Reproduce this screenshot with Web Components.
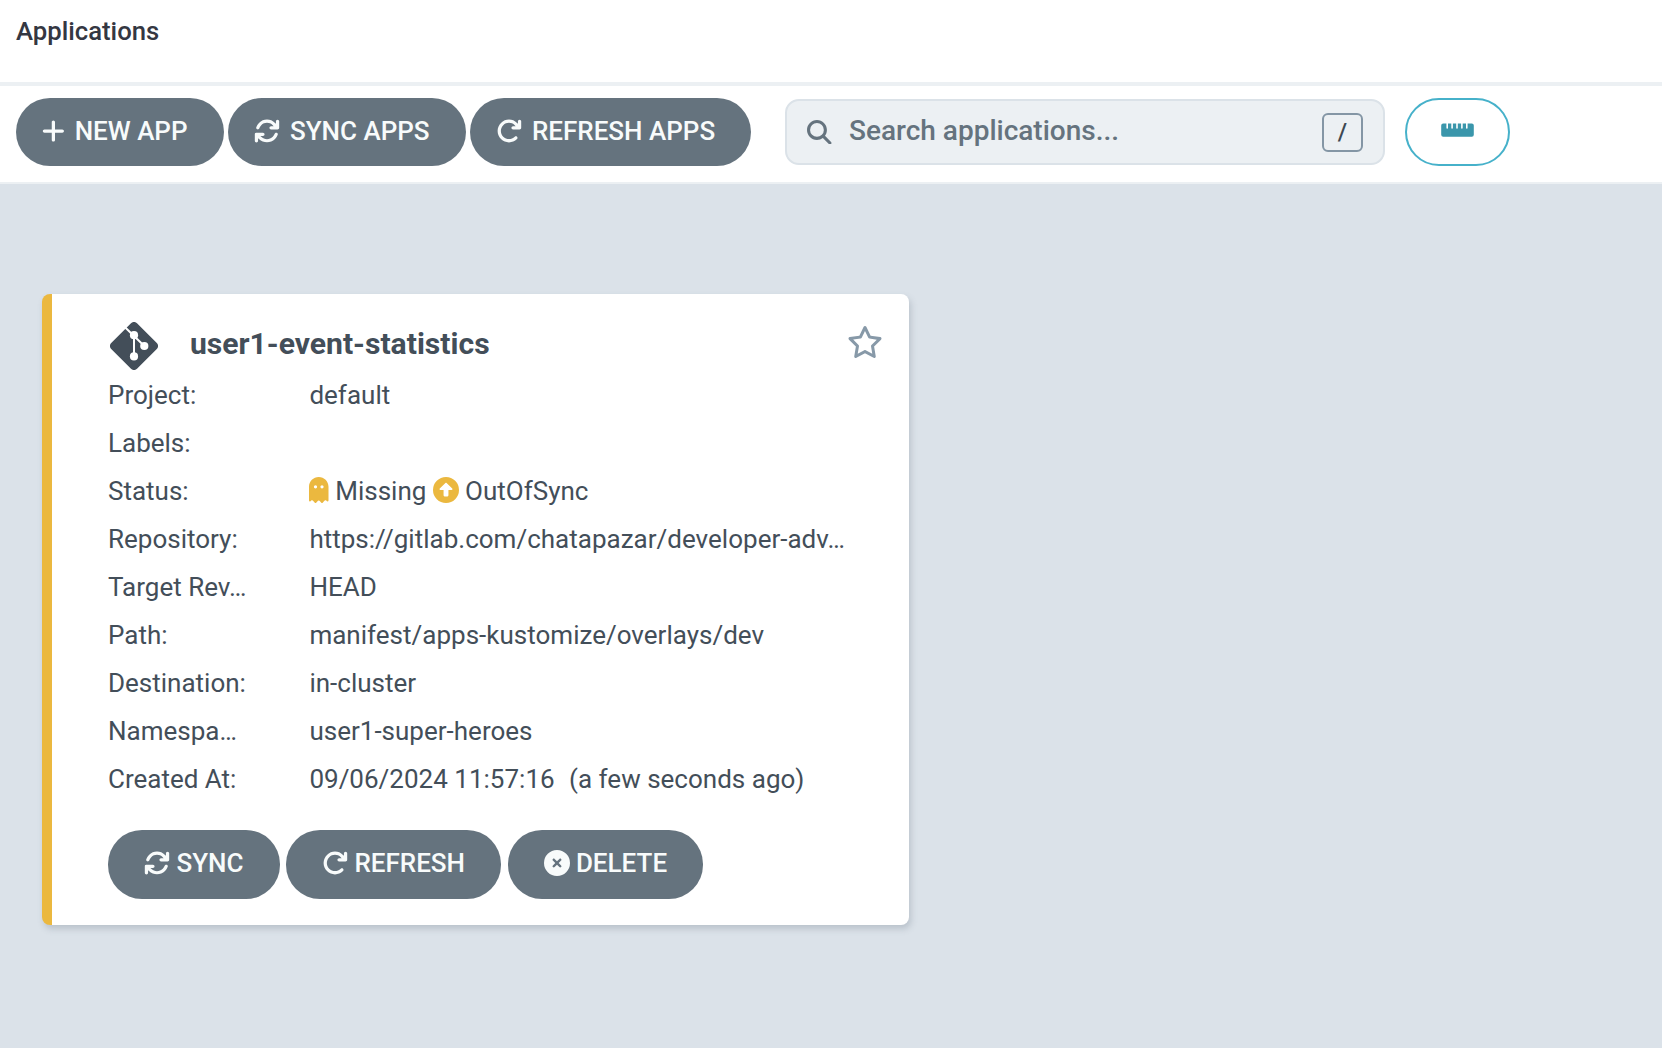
<!DOCTYPE html>
<html lang="en">
<head>
<meta charset="utf-8">
<title>Applications</title>
<style>
  html, body { margin: 0; height: 100%; }
  body { background: #dbe2e9; font-family: Roboto, "Liberation Sans", sans-serif; font-size: 26px; color: #434e59; overflow: hidden; }
</style>
</head>
<body>
<applications-page></applications-page>
<script>
const ICONS = {
  plus: [448, 512, 'M256 80c0-17.7-14.3-32-32-32s-32 14.3-32 32V224H48c-17.7 0-32 14.3-32 32s14.3 32 32 32H192V432c0 17.7 14.3 32 32 32s32-14.3 32-32V288H400c17.7 0 32-14.3 32-32s-14.3-32-32-32H256V80z'],
  sync: [512, 512, 'M105.1 202.6c7.7-21.8 20.2-42.3 37.8-59.8c62.5-62.5 163.8-62.5 226.3 0L386.3 160H336c-17.7 0-32 14.3-32 32s14.3 32 32 32H463.9c17.7 0 32-14.3 32-32V64c0-17.7-14.3-32-32-32s-32 14.3-32 32v51.2L414.4 97.6c-87.5-87.5-229.3-87.5-316.8 0C73.2 122 55.6 150.7 44.8 181.4c-5.9 16.7 2.9 34.9 19.5 40.8s34.9-2.9 40.8-19.5zM39 289.3c-5 1.5-9.8 4.2-13.7 8.2c-4 4-6.7 8.8-8.1 14c-.3 1.2-.6 2.5-.8 3.8c-.3 1.7-.4 3.4-.4 5.1V448c0 17.7 14.3 32 32 32s32-14.3 32-32V396.9l17.6 17.5c87.5 87.4 229.3 87.4 316.7 0c24.4-24.4 42.1-53.1 52.9-83.7c5.9-16.7-2.9-34.9-19.5-40.8s-34.9 2.9-40.8 19.5c-7.7 21.8-20.2 42.3-37.8 59.8c-62.5 62.5-163.8 62.5-226.3 0l-.1-.1L125.6 352H176c17.7 0 32-14.3 32-32s-14.3-32-32-32H48.4c-1.6 0-3.2 .1-4.8 .3s-3.1 .5-4.6 1z'],
  refresh: [512, 512, 'M386.3 160H336c-17.7 0-32 14.3-32 32s14.3 32 32 32H464c17.7 0 32-14.3 32-32V64c0-17.7-14.3-32-32-32s-32 14.3-32 32v51.2L414.4 97.6c-87.5-87.5-229.3-87.5-316.8 0s-87.5 229.3 0 316.8s229.3 87.5 316.8 0c12.5-12.5 12.5-32.8 0-45.3s-32.8-12.5-45.3 0c-62.5 62.5-163.8 62.5-226.3 0s-62.5-163.8 0-226.3s163.8-62.5 226.3 0L386.3 160z'],
  search: [512, 512, 'M416 208c0 45.9-14.9 88.3-40 122.7L502.6 457.4c12.5 12.5 12.5 32.8 0 45.3s-32.8 12.5-45.3 0L330.7 376c-34.4 25.2-76.8 40-122.7 40C93.1 416 0 322.9 0 208S93.1 0 208 0S416 93.1 416 208zM208 352a144 144 0 1 0 0-288 144 144 0 1 0 0 288z'],
  ghost: [384, 512, 'M40.1 467.1l-11.2 9c-3.2 2.5-7.1 3.9-11.1 3.9C8 480 0 472 0 462.2V192C0 86 86 0 192 0S384 86 384 192V462.2c0 9.8-8 17.8-17.8 17.8c-4 0-7.9-1.4-11.1-3.9l-11.2-9c-13.4-10.7-32.8-9-44.1 3.9L269.3 506c-3.3 3.8-8.2 6-13.3 6s-9.9-2.2-13.3-6l-26.6-30.5c-12.7-14.6-35.4-14.6-48.2 0L141.3 506c-3.3 3.8-8.2 6-13.3 6s-9.9-2.2-13.3-6L84.2 471c-11.3-12.9-30.7-14.6-44.1-3.9zM160 192a32 32 0 1 0 -64 0 32 32 0 1 0 64 0zm96 32a32 32 0 1 0 0-64 32 32 0 1 0 0 64z'],
  up: [512, 512, 'M256 512A256 256 0 1 0 256 0a256 256 0 1 0 0 512zm11.3-395.3l112 112c4.6 4.6 5.9 11.5 3.5 17.4s-8.3 9.9-14.8 9.9H304v96c0 17.7-14.3 32-32 32H240c-17.7 0-32-14.3-32-32V256H144c-6.5 0-12.3-3.9-14.8-9.9s-1.1-12.9 3.5-17.4l112-112c6.2-6.2 16.4-6.2 22.6 0z'],
  remove: [512, 512, 'M256 512A256 256 0 1 0 256 0a256 256 0 1 0 0 512zM175 175c9.4-9.4 24.6-9.4 33.9 0l47 47 47-47c9.4-9.4 24.6-9.4 33.9 0s9.4 24.6 0 33.9l-47 47 47 47c9.4 9.4 9.4 24.6 0 33.9s-24.6 9.4-33.9 0l-47-47-47 47c-9.4 9.4-24.6 9.4-33.9 0s-9.4-24.6 0-33.9l47-47-47-47c-9.4-9.4-9.4-24.6 0-33.9z'],
  star: [576, 512, 'M287.9 0c9.2 0 17.6 5.2 21.6 13.5l68.6 141.3 153.2 22.6c9 1.3 16.5 7.6 19.3 16.3s.5 18.1-5.9 24.5L433.6 328.4l26.2 155.6c1.5 9-2.2 18.1-9.6 23.5s-17.3 6-25.3 1.7l-137-73.2L151 509.1c-8.1 4.3-17.9 3.7-25.3-1.7s-11.2-14.5-9.7-23.5l26.2-155.6L31.1 218.2c-6.5-6.4-8.7-15.9-5.9-24.5s10.3-14.9 19.3-16.3l153.2-22.6L266.3 13.5C270.4 5.2 278.7 0 287.9 0zm0 79L235.4 187.2c-3.5 7.1-10.2 12.1-18.1 13.3L99 217.9 184.9 303c5.5 5.5 8.1 13.3 6.8 21L171.4 443.7l105.2-56.2c7.1-3.8 15.6-3.8 22.6 0l105.2 56.2L384.2 324.1c-1.3-7.7 1.2-15.5 6.8-21l85.9-85.1L358.6 200.5c-7.8-1.2-14.6-6.1-18.1-13.3L287.9 79z'],
  git: [48, 48, 'M21 1.2a4.2 4.2 0 0 1 6 0L46.8 21a4.2 4.2 0 0 1 0 6L27 46.8a4.2 4.2 0 0 1-6 0L1.2 27a4.2 4.2 0 0 1 0-6z',
    '<path d="M15.5 5.7L34.3 24M24 13V34.3" fill="none" stroke="#fff" stroke-width="2"/><g fill="#fff"><circle cx="24" cy="13.2" r="4.1"/><circle cx="34.3" cy="24" r="4.1"/><circle cx="24" cy="34.4" r="4.1"/></g>'],
  ruler: [33, 14, 'M2.2 .5H5.4V5a.8 .8 0 0 0 1.6 0V.5H10.3V5a.8 .8 0 0 0 1.6 0V.5H15.2V5a.8 .8 0 0 0 1.6 0V.5H20.1V5a.8 .8 0 0 0 1.6 0V.5H25V5a.8 .8 0 0 0 1.6 0V.5H30.8a2 2 0 0 1 2 2V11.7a2 2 0 0 1-2 2H2.2a2 2 0 0 1-2-2V2.5a2 2 0 0 1 2-2z']
};

function define(name, html, setup) {
  const template = document.createElement('template');
  template.innerHTML = html;
  customElements.define(name, class extends HTMLElement {
    connectedCallback() {
      if (this.shadowRoot) return;
      const root = this.attachShadow({ mode: 'open' });
      root.append(template.content.cloneNode(true));
      if (setup) setup(this, root);
    }
  });
}

define('ui-icon', `
<style>:host { display: inline-flex; flex: none } svg { display: block; fill: currentColor }</style>
<svg aria-hidden="true"></svg>`, (host, root) => {
  const [w, h, d, detail = ''] = ICONS[host.getAttribute('name')];
  const size = Number(host.getAttribute('size') || 26);
  const svg = root.querySelector('svg');
  svg.setAttribute('viewBox', `0 0 ${w} ${h}`);
  svg.setAttribute('height', size);
  svg.setAttribute('width', size * w / h);
  svg.innerHTML = `<path d="${d}"/>${detail}`;
});

define('pill-button', `
<style>
  :host { display: block; flex: none }
  button { all: unset; box-sizing: border-box; display: flex; align-items: center; width: 100%; height: var(--h, 68px);
    padding: 0 0 3px var(--pad, 26px); gap: var(--gap, 9.9px); border-radius: 34px; background: #65737e; color: #f8fbfb;
    font-weight: 500; white-space: nowrap }
  :host([outline]) button { background: #fff; border: 2px solid #46b1ca; color: #3a96ab; justify-content: center; padding: 0 0 4px }
</style>
<button><slot></slot></button>`);

define('search-box', `
<style>
  :host { display: flex; box-sizing: border-box; align-items: center; width: 600px; height: 66px; margin: 1px 20px 0 34px; padding: 0 20px;
    border: 2px solid #dbe2e8; border-radius: 14px; background: #ecf0f3; color: #65737e; font-size: 28px; font-weight: 500 }
  span { flex: 1; margin-left: 17.5px; padding-bottom: 3px }
  kbd { box-sizing: border-box; width: 41px; height: 39px; border: 2px solid #8496a5; border-radius: 6px; color: #3d4852;
    font: 500 24px/35px Roboto, sans-serif; text-align: center }
</style>
<ui-icon name="search" size="24.5"></ui-icon><span><slot></slot></span><kbd>/</kbd>`);

define('page-header', `
<style>
  :host { display: block; box-sizing: border-box; height: 86px; padding: 16px 16px 0; border-bottom: 4px solid #ecf0f3; background: #fff;
    color: #343742; font-size: 25.7px; line-height: 30px; font-weight: 500 }
</style><slot></slot>`);

define('app-toolbar', `
<style>
  :host { display: flex; box-sizing: border-box; height: 98px; padding: 12px 16px; align-items: flex-start; background: #fff; border-bottom: 2px solid #ecf0f3 }
  .actions { display: flex; gap: 4px }
</style>
<div class="actions">
  <pill-button style="width:208px"><ui-icon name="plus"></ui-icon><span>NEW APP</span></pill-button>
  <pill-button style="width:238px"><ui-icon name="sync"></ui-icon><span>SYNC APPS</span></pill-button>
  <pill-button style="width:281px"><ui-icon name="refresh"></ui-icon><span>REFRESH APPS</span></pill-button>
</div>
<search-box>Search applications...</search-box>
<pill-button outline style="width:105px"><ui-icon name="ruler" size="14"></ui-icon></pill-button>`);

define('info-row', `
<style>
  :host { display: grid; grid-template-columns: 201.4px 1fr; height: 48px; line-height: 48px; white-space: nowrap }
  div { display: flex; align-items: center; white-space: pre; letter-spacing: .01px }
</style>
<span></span><div><slot></slot></div>`, (host, root) => {
  root.querySelector('span').textContent = host.getAttribute('label');
});

define('app-card', `
<style>
  :host { display: flex; flex-direction: column; box-sizing: border-box; width: 867px; height: 631px; padding: 27px 27px 0 56px;
    background: #fff; border-left: 10px solid #ebb83f; border-radius: 8px; box-shadow: 2px 4px 6px rgba(90, 105, 120, .25) }
  header { display: flex; align-items: center; height: 50px; padding-left: 2px }
  h2 { flex: 1; margin: 0 0 5px 32px; font-size: 30.1px; line-height: 40px; font-weight: 700 }
  .star { color: #8799a8; margin-bottom: 8px; margin-right: -1px }
  .gold { color: #ebb83f }
  footer { display: flex; margin-top: 27px; --h: 69px; --pad: 36px; --gap: 6.4px }
</style>
<header><ui-icon name="git" size="48"></ui-icon><h2><slot></slot></h2><ui-icon class="star" name="star" size="32"></ui-icon></header>
<info-row label="Project:">default</info-row>
<info-row label="Labels:"></info-row>
<info-row label="Status:"><ui-icon class="gold" name="ghost" style="margin:0 6.3px 3px 0"></ui-icon><span>Missing</span><ui-icon class="gold" name="up" style="margin:0 6.3px 3px 6.3px"></ui-icon><span>OutOfSync</span></info-row>
<info-row label="Repository:">https://gitlab.com/chatapazar/developer-adv…</info-row>
<info-row label="Target Rev…">HEAD</info-row>
<info-row label="Path:">manifest/apps-kustomize/overlays/dev</info-row>
<info-row label="Destination:">in-cluster</info-row>
<info-row label="Namespa…">user1-super-heroes</info-row>
<info-row label="Created At:"><span>09/06/2024 11:57:16</span><span style="margin-left:1.5px">&nbsp; (a few seconds ago)</span></info-row>
<footer>
  <pill-button style="width:172px"><ui-icon name="sync"></ui-icon><span>SYNC</span></pill-button>
  <pill-button style="width:215px;margin-left:6px"><ui-icon name="refresh"></ui-icon><span>REFRESH</span></pill-button>
  <pill-button style="width:195px;margin-left:7px;--pad:35.5px"><ui-icon name="remove"></ui-icon><span>DELETE</span></pill-button>
</footer>`);

define('applications-page', `
<style>:host { display: block } main { padding: 110px 42px }</style>
<page-header>Applications</page-header>
<app-toolbar></app-toolbar>
<main><app-card>user1-event-statistics</app-card></main>`);
</script>
</body>
</html>
